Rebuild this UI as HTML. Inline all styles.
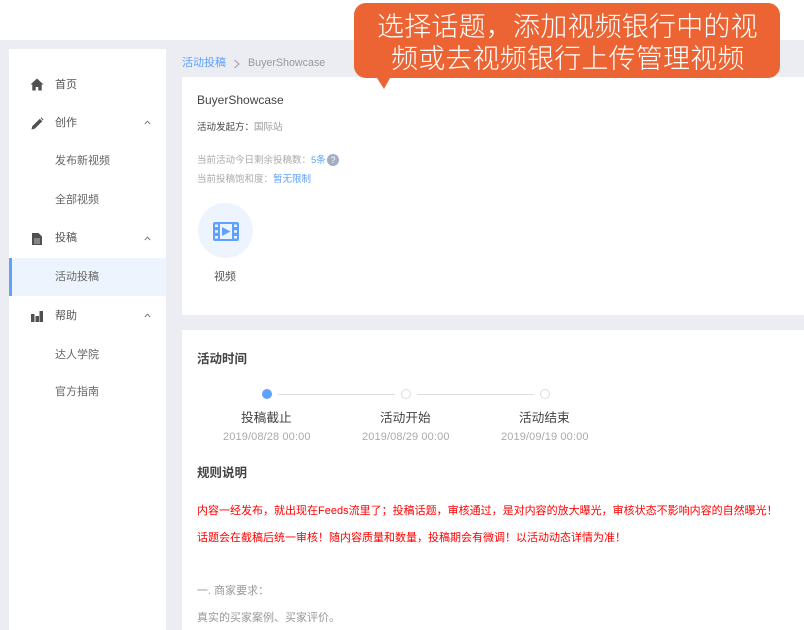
<!DOCTYPE html>
<html lang="zh"><head><meta charset="utf-8"><style>
*{margin:0;padding:0;box-sizing:border-box}
html,body{width:804px;height:630px;overflow:hidden;background:#fff}
body{position:relative;font-family:"Liberation Sans","Noto Sans CJK SC",sans-serif}
.a{position:absolute;white-space:nowrap;line-height:16px}
.m{font-size:11px;color:#555}
.s{font-size:11px;color:#666}
svg{position:absolute;display:block}
</style></head><body>
<div class="a" style="left:0;top:40px;width:804px;height:590px;background:#ecedf3"></div>
<div class="a" style="left:9px;top:49px;width:157px;height:581px;background:#fff"></div>
<div class="a" style="left:9px;top:258px;width:157px;height:38px;background:#edf4fd"></div>
<div class="a" style="left:9px;top:258px;width:3px;height:38px;background:#5fa1fb"></div>

<svg style="left:30px;top:78px" width="14" height="13" viewBox="0 0 14 13"><path d="M7 .5 L13.500 6.500 H11.700 V12.500 H8.300 V9 H5.700 V12.500 H2.300 V6.500 H.5Z" fill="#505050"/></svg>
<div class="a m" style="left:55px;top:77px">首页</div>
<svg style="left:31px;top:117px" width="13" height="13" viewBox="0 0 13 13"><path d="M.5 12.500 L1.200 9.300 L8.800 1.700 L11.300 4.200 L3.700 11.800Z M9.600 1 L10.400 .4 L12.600 2.600 L12 3.400Z" fill="#505050"/></svg>
<div class="a m" style="left:55px;top:115px">创作</div>
<svg style="left:144px;top:120px" width="7" height="5" viewBox="0 0 7 5"><path d="M.8 4 L3.500 1.200 L6.200 4" fill="none" stroke="#777" stroke-width="1"/></svg>
<div class="a s" style="left:55px;top:153px">发布新视频</div>
<div class="a s" style="left:55px;top:192px">全部视频</div>
<svg style="left:32px;top:233px" width="10" height="12" viewBox="0 0 10 12"><path d="M0 0 H6.500 L10 3.500 V12 H0Z" fill="#505050"/><path d="M2 6 H8 M2 8 H8 M2 10 H8" stroke="#ddd" stroke-width=".7"/></svg>
<div class="a m" style="left:55px;top:230px">投稿</div>
<svg style="left:144px;top:236px" width="7" height="5" viewBox="0 0 7 5"><path d="M.8 4 L3.500 1.200 L6.200 4" fill="none" stroke="#777" stroke-width="1"/></svg>
<div class="a s" style="left:55px;top:269px">活动投稿</div>
<svg style="left:31px;top:311px" width="12" height="11" viewBox="0 0 12 11"><path d="M0 3 H3.500 V11 H0Z M4.500 5 H8 V11 H4.500Z M8.500 0 H12 V11 H8.500Z" fill="#505050"/></svg>
<div class="a m" style="left:55px;top:308px">帮助</div>
<svg style="left:144px;top:313px" width="7" height="5" viewBox="0 0 7 5"><path d="M.8 4 L3.500 1.200 L6.200 4" fill="none" stroke="#777" stroke-width="1"/></svg>
<div class="a s" style="left:55px;top:347px">达人学院</div>
<div class="a s" style="left:55px;top:384px">官方指南</div>

<div class="a" style="left:182px;top:55px;font-size:11px;color:#5fa1fb">活动投稿</div>
<svg style="left:233px;top:59px" width="8" height="10" viewBox="0 0 8 10"><path d="M1.500 1 L6 5 L1.500 9" fill="none" stroke="#999" stroke-width="1"/></svg>
<div class="a" style="left:248px;top:55px;font-size:10.700px;color:#999">BuyerShowcase</div>

<div class="a" style="left:182px;top:77px;width:622px;height:238px;background:#fff"></div>
<div class="a" style="left:197px;top:92px;font-size:12px;color:#444">BuyerShowcase</div>
<div class="a" style="left:197px;top:120px;font-size:9.500px;color:#444">活动发起方：<span style="color:#999">国际站</span></div>
<div class="a" style="left:197px;top:153px;font-size:9.500px;color:#aaa">当前活动今日剩余投稿数：<span style="color:#5fa1fb">5条</span></div>
<div class="a" style="left:327px;top:154px;width:12px;height:12px;border-radius:50%;background:#a3aec4;color:#fff;font-size:9px;line-height:12px;text-align:center">?</div>
<div class="a" style="left:197px;top:172px;font-size:9.500px;color:#aaa">当前投稿饱和度：<span style="color:#5fa1fb">暂无限制</span></div>
<div class="a" style="left:198px;top:203px;width:55px;height:55px;border-radius:50%;background:#edf4fd"></div>
<svg style="left:213px;top:222px" width="26" height="19" viewBox="0 0 26 19"><rect width="26" height="19" rx="2" fill="#5fa1fb"/><rect x="7" y="2" width="12" height="15" fill="#edf4fd"/><path d="M2 2.500h3v2.500H2z M2 8.300h3v2.500H2z M2 14h3v2.500H2z M21 2.500h3v2.500h-3z M21 8.300h3v2.500h-3z M21 14h3v2.500h-3z" fill="#edf4fd"/><path d="M9 5 L17.500 9.500 L9 14Z" fill="#5fa1fb"/></svg>
<div class="a" style="left:214px;top:269px;font-size:11px;color:#555">视频</div>

<div class="a" style="left:182px;top:330px;width:622px;height:300px;background:#fff"></div>
<div class="a" style="left:197px;top:351px;font-size:12.500px;font-weight:bold;color:#444">活动时间</div>
<div class="a" style="left:262px;top:389px;width:10px;height:10px;border-radius:50%;background:#5fa1fb"></div>
<div class="a" style="left:278px;top:394px;width:117px;height:1px;background:#ddd"></div>
<div class="a" style="left:401px;top:389px;width:10px;height:10px;border-radius:50%;border:1px solid #ddd;background:#fff"></div>
<div class="a" style="left:417px;top:394px;width:117px;height:1px;background:#ddd"></div>
<div class="a" style="left:540px;top:389px;width:10px;height:10px;border-radius:50%;border:1px solid #ddd;background:#fff"></div>
<div class="a" style="left:241px;top:410px;font-size:12.700px;color:#444">投稿截止</div>
<div class="a" style="left:380px;top:410px;font-size:12.700px;color:#444">活动开始</div>
<div class="a" style="left:519px;top:410px;font-size:12.700px;color:#444">活动结束</div>
<div class="a" style="left:223px;top:429px;font-size:11px;letter-spacing:.12px;color:#aaa">2019/08/28 00:00</div>
<div class="a" style="left:362px;top:429px;font-size:11px;letter-spacing:.12px;color:#aaa">2019/08/29 00:00</div>
<div class="a" style="left:501px;top:429px;font-size:11px;letter-spacing:.12px;color:#aaa">2019/09/19 00:00</div>
<div class="a" style="left:197px;top:465px;font-size:12.500px;font-weight:bold;color:#444">规则说明</div>
<div class="a" style="left:197px;top:503px;font-size:11px;color:#f00">内容一经发布，就出现在Feeds流里了；投稿话题，审核通过，是对内容的放大曝光，审核状态不影响内容的自然曝光！</div>
<div class="a" style="left:197px;top:530px;font-size:11px;color:#f00">话题会在截稿后统一审核！随内容质量和数量，投稿期会有微调！以活动动态详情为准！</div>
<div class="a" style="left:197px;top:583px;font-size:11px;color:#999">一. 商家要求：</div>
<div class="a" style="left:197px;top:610px;font-size:11px;color:#999">真实的买家案例、买家评价。</div>

<div class="a" style="left:354px;top:3px;width:426px;height:75px;border-radius:12px;background:#ec6433"></div>
<svg style="left:377px;top:78px" width="14" height="12" viewBox="0 0 14 12"><path d="M0 0 H13 L7 11Z" fill="#ec6433"/></svg>
<div class="a" style="left:377px;top:11px;font-size:27px;font-weight:300;line-height:32px;letter-spacing:.2px;color:#fff">选择话题，添加视频银行中的视</div>
<div class="a" style="left:391px;top:43px;font-size:27px;font-weight:300;line-height:32px;letter-spacing:.2px;color:#fff">频或去视频银行上传管理视频</div>
</body></html>
